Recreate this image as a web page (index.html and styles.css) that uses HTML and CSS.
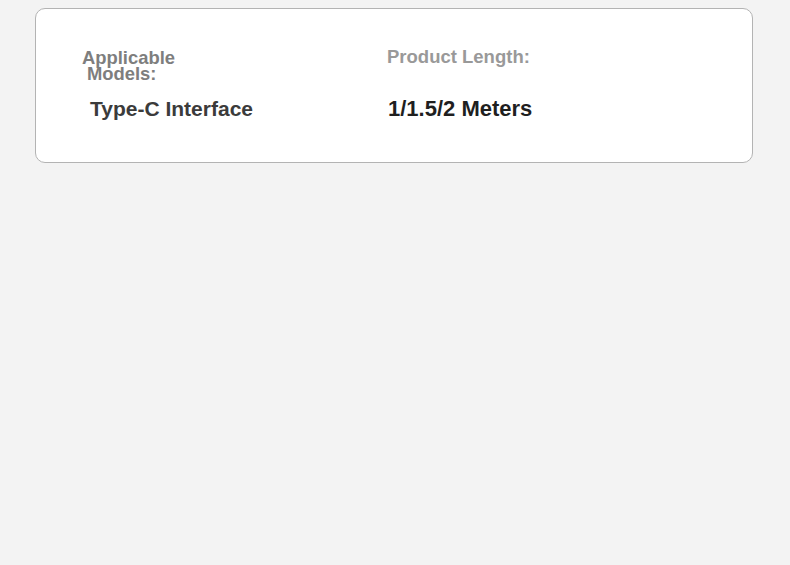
FILE: index.html
```html
<!DOCTYPE html>
<html lang="en">
<head>
  <meta charset="UTF-8" />
  <title>Product Specs</title>
  <link rel="stylesheet" href="styles.css">
</head>
<body>

  <div class="card">
    <div class="specs">
      <div class="label label-models">Applicable<br><span class="indent">Models:</span></div>
      <div class="label label-length">Product Length:</div>
      <div class="value value-models">Type-C Interface</div>
      <div class="value value-length">1/1.5/2 Meters</div>
    </div>
  </div>

</body>
</html>
```

FILE: styles.css
```css
    body {
      font-family: "Liberation Sans", Arial, sans-serif;
      margin: 0;
      background-color: #f3f3f3;
    }
    .card {
      margin: 8px 0 0 35px;
      width: 670px;
      padding: 41px 0 41px 46px;
      background-color: #fff;
      border: 1px solid #b3b3b3;
      border-radius: 10px;
    }
    .specs {
      display: grid;
      grid-template-columns: 305px auto;
      grid-template-rows: 32px auto;
      row-gap: 15px;
    }
    .label {
      font-weight: bold;
      line-height: 16px;
    }
    .label-models {
      font-size: 18.4px;
      color: #7e7e7e;
    }
    .label-models .indent {
      padding-left: 5px;
    }
    .label-length {
      font-size: 18.5px;
      color: #999;
      margin-top: -1px;
    }
    .value {
      font-weight: bold;
      line-height: 24px;
    }
    .value-models {
      font-size: 21px;
      color: #3b3b3b;
      padding-left: 8px;
    }
    .value-length {
      font-size: 22px;
      color: #1f1f1f;
      padding-left: 1px;
    }
```
